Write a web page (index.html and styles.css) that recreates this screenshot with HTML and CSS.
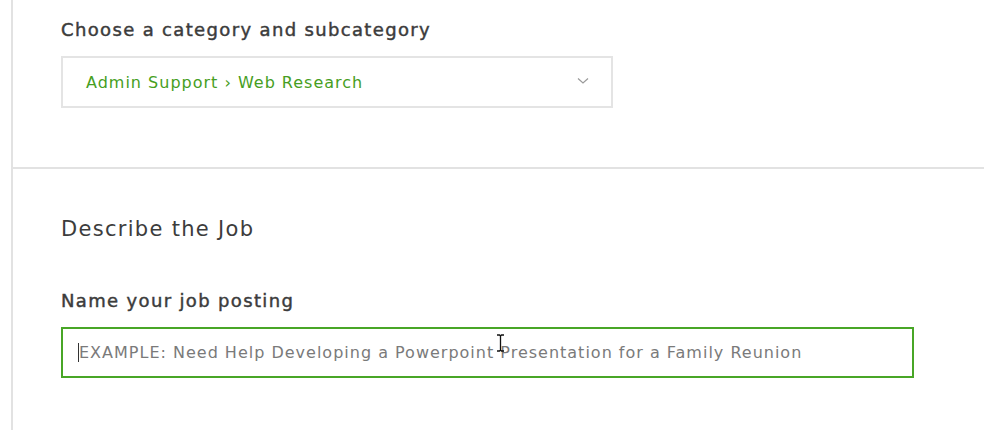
FILE: index.html
```html
<!DOCTYPE html>
<html>
<head>
<meta charset="utf-8">
<link rel="stylesheet" href="styles.css">
</head>
<body>
<div class="page">
  <div class="panel">
    <section class="section top">
      <label class="label">Choose a category and subcategory</label>
      <div class="select">
        <span class="select-value">Admin Support › Web Research</span>
        <svg class="chevron" width="12" height="8" viewBox="0 0 12 8"><path d="M1 1.5 L6 6 L11 1.5" fill="none" stroke="#9a9a9a" stroke-width="1.2"/></svg>
      </div>
    </section>
    <section class="section bottom">
      <h2 class="heading">Describe the Job</h2>
      <label class="label">Name your job posting</label>
      <div class="input">
        <span class="caret"></span><span class="placeholder">EXAMPLE: Need Help Developing a Powerpoint Presentation for a Family Reunion</span>
        <svg class="ibeam" width="9" height="18" viewBox="0 0 9 18"><path d="M1 1 H3.5 L4.5 2 L5.5 1 H8 M4.5 2 V16 M1 17 H3.5 L4.5 16 L5.5 17 H8" fill="none" stroke="#111" stroke-width="1.3"/></svg>
      </div>
    </section>
  </div>
</div>
</body>
</html>
```
FILE: styles.css
```css
html, body {
  margin: 0;
  padding: 0;
  background: #fff;
}
body {
  font-family: "DejaVu Sans", "Liberation Sans", sans-serif;
  color: #3a3a3a;
}
.page {
  width: 984px;
  height: 430px;
  overflow: hidden;
  padding-left: 11px;
  box-sizing: border-box;
}
.panel {
  border-left: 2px solid #e2e2e2;
  height: 100%;
}
.section {
  padding-left: 48px;
}
.top {
  padding-top: 18px;
  height: 169px;
  box-sizing: border-box;
  border-bottom: 2px solid #e2e2e2;
}
.label {
  display: block;
  font-size: 18px;
  font-weight: 400;
  -webkit-text-stroke: 0.45px #3c3c3c;
  letter-spacing: 1.35px;
  line-height: 24px;
  color: #3c3c3c;
  margin-bottom: 14px;
}
.select {
  width: 552px;
  height: 52px;
  box-sizing: border-box;
  border: 2px solid #e4e4e4;
  display: flex;
  align-items: center;
  justify-content: space-between;
  padding: 0 22px 0 23px;
}
.select-value {
  font-size: 16px;
  letter-spacing: 1px;
  color: #469e22;
}
.chevron {
  margin-top: -2px;
}
.bottom {
  padding-top: 46px;
}
.heading {
  margin: 0 0 46px 0;
  font-size: 21px;
  font-weight: 400;
  letter-spacing: 1.3px;
  line-height: 28px;
  color: #3c3c3c;
}
.bottom .label {
  margin-bottom: 14px;
}
.input {
  position: relative;
  width: 853px;
  height: 51px;
  box-sizing: border-box;
  border: 2px solid #48a626;
  display: flex;
  align-items: center;
  padding-left: 15px;
}
.caret {
  width: 1px;
  height: 19px;
  background: #333;
}
.placeholder {
  font-size: 16px;
  letter-spacing: 1px;
  color: #7a7a7a;
}
.ibeam {
  position: absolute;
  left: 433px;
  top: 5px;
}
```
